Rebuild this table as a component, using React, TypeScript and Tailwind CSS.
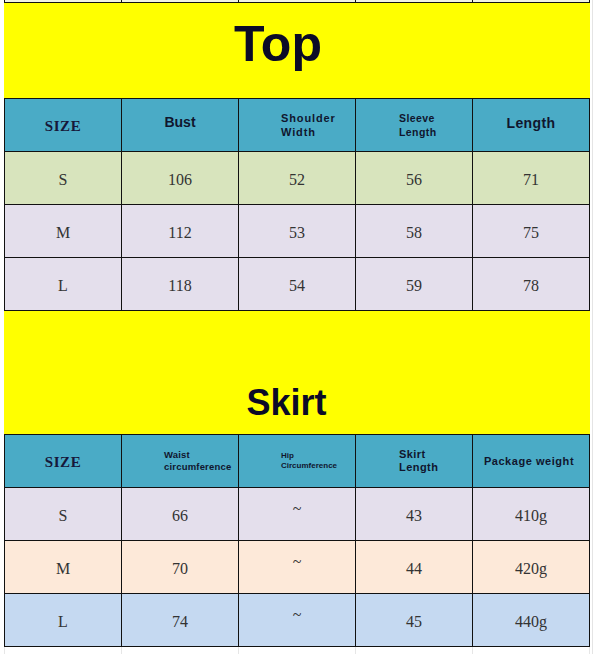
import React from 'react';

type Cell = { text: React.ReactNode; kind?: 'tilde' };

const serif = { fontFamily: '"Liberation Serif", "DejaVu Serif", serif' };
const sans = { fontFamily: '"Liberation Sans", Arial, sans-serif' };

function Strip() {
  return (
    <div className="grid grid-cols-[repeat(5,117px)] border-l border-[#111]">
      {[0, 1, 2, 3, 4].map((i) => (
        <div key={i} className="h-[3px] border-r border-b border-[#111] bg-[#f1f2e2]" />
      ))}
    </div>
  );
}

function SizeHeader() {
  return (
    <div
      className="h-[53px] border-r border-b border-[#111] bg-[#4aabc6] flex items-center justify-center pt-[2px] text-[15px] font-bold text-[#16183a] tracking-[0.04em]"
      style={serif}
    >
      SIZE
    </div>
  );
}

function HeadCell({ children, className }: { children: React.ReactNode; className: string }) {
  return (
    <div
      className={`h-[53px] border-r border-b border-[#111] bg-[#4aabc6] flex items-center font-bold text-[#10162e] ${className}`}
      style={sans}
    >
      {children}
    </div>
  );
}

function BodyRow({ bg, cells }: { bg: string; cells: Cell[] }) {
  return (
    <>
      {cells.map((c, i) => (
        <div
          key={i}
          className={`h-[53px] border-r border-b border-[#111] flex items-center justify-center text-[16px] text-[#333] ${bg} ${
            c.kind === 'tilde' ? 'pb-[10px] text-[13px]' : 'pt-[3px]'
          }`}
          style={serif}
        >
          {c.text}
        </div>
      ))}
    </>
  );
}

const topRows = [
  { bg: 'bg-[#d8e4bd]', cells: ['S', '106', '52', '56', '71'] },
  { bg: 'bg-[#e4dfec]', cells: ['M', '112', '53', '58', '75'] },
  { bg: 'bg-[#e4dfec]', cells: ['L', '118', '54', '59', '78'] },
];

const skirtRows = [
  { bg: 'bg-[#e4dfec]', cells: ['S', '66', '~', '43', '410g'] },
  { bg: 'bg-[#fde9d9]', cells: ['M', '70', '~', '44', '420g'] },
  { bg: 'bg-[#c5d9f1]', cells: ['L', '74', '~', '45', '440g'] },
];

export default function App() {
  return (
    <div className="w-[595px] h-[654px] bg-white flex overflow-hidden">
      <div className="w-[4px]" />

      <div className="w-[586px] flex flex-col">
        <Strip />

        {/* Top title */}
        <div className="h-[95px] bg-[#ffff00] flex justify-center pt-[16px] pr-[38px]">
          <span className="text-[50px] leading-[50px] font-bold text-[#0b0b27]" style={sans}>
            Top
          </span>
        </div>

        {/* Top table */}
        <div className="grid grid-cols-[repeat(5,117px)] border-l border-t border-[#111]">
          <SizeHeader />
          <HeadCell className="justify-center pb-[5px] text-[14px]">Bust</HeadCell>
          <HeadCell className="justify-start pl-[42px] pb-[1px] text-[11px] leading-[14px] tracking-[0.08em]">
            <div>
              Shoulder
              <br />
              Width
            </div>
          </HeadCell>
          <HeadCell className="justify-start pl-[43px] pb-[1px] text-[10.5px] leading-[14px] tracking-[0.04em]">
            <div>
              Sleeve
              <br />
              Length
            </div>
          </HeadCell>
          <HeadCell className="justify-center pb-[4px] text-[14px] tracking-[0.03em]">Length</HeadCell>
          {topRows.map((r, i) => (
            <BodyRow key={i} bg={r.bg} cells={r.cells.map((t) => ({ text: t }))} />
          ))}
        </div>

        {/* Skirt title */}
        <div className="h-[123px] bg-[#ffff00] flex justify-center pt-[74px] pr-[21px]">
          <span className="text-[36px] leading-[36px] font-bold text-[#0b0b27]" style={sans}>
            Skirt
          </span>
        </div>

        {/* Skirt table */}
        <div className="grid grid-cols-[repeat(5,117px)] border-l border-t border-[#111]">
          <SizeHeader />
          <HeadCell className="justify-start pl-[42px] text-[9.5px] leading-[12px] tracking-[0.02em]">
            <div>
              Waist
              <br />
              circumference
            </div>
          </HeadCell>
          <HeadCell className="justify-start pl-[42px] text-[8px] leading-[10px]">
            <div>
              Hip
              <br />
              Circumference
            </div>
          </HeadCell>
          <HeadCell className="justify-start pl-[43px] text-[11px] leading-[13px] tracking-[0.04em]">
            <div>
              Skirt
              <br />
              Length
            </div>
          </HeadCell>
          <HeadCell className="justify-center pr-[4px] text-[11px] tracking-[0.05em]">Package weight</HeadCell>
          {skirtRows.map((r, i) => (
            <BodyRow
              key={i}
              bg={r.bg}
              cells={r.cells.map((t) => ({ text: t, kind: t === '~' ? 'tilde' : undefined }))}
            />
          ))}
        </div>

        {/* faint sheet grid below */}
        <div className="grid grid-cols-[repeat(5,117px)] border-l border-[#e6e6e6] flex-1">
          {[0, 1, 2, 3, 4].map((i) => (
            <div key={i} className="border-r border-[#e6e6e6]" />
          ))}
        </div>
      </div>

      <div className="w-[5px] flex">
        <div className="w-[2px]" />
        <div className="w-[1px] bg-[#e4e4e4]" />
      </div>
    </div>
  );
}
